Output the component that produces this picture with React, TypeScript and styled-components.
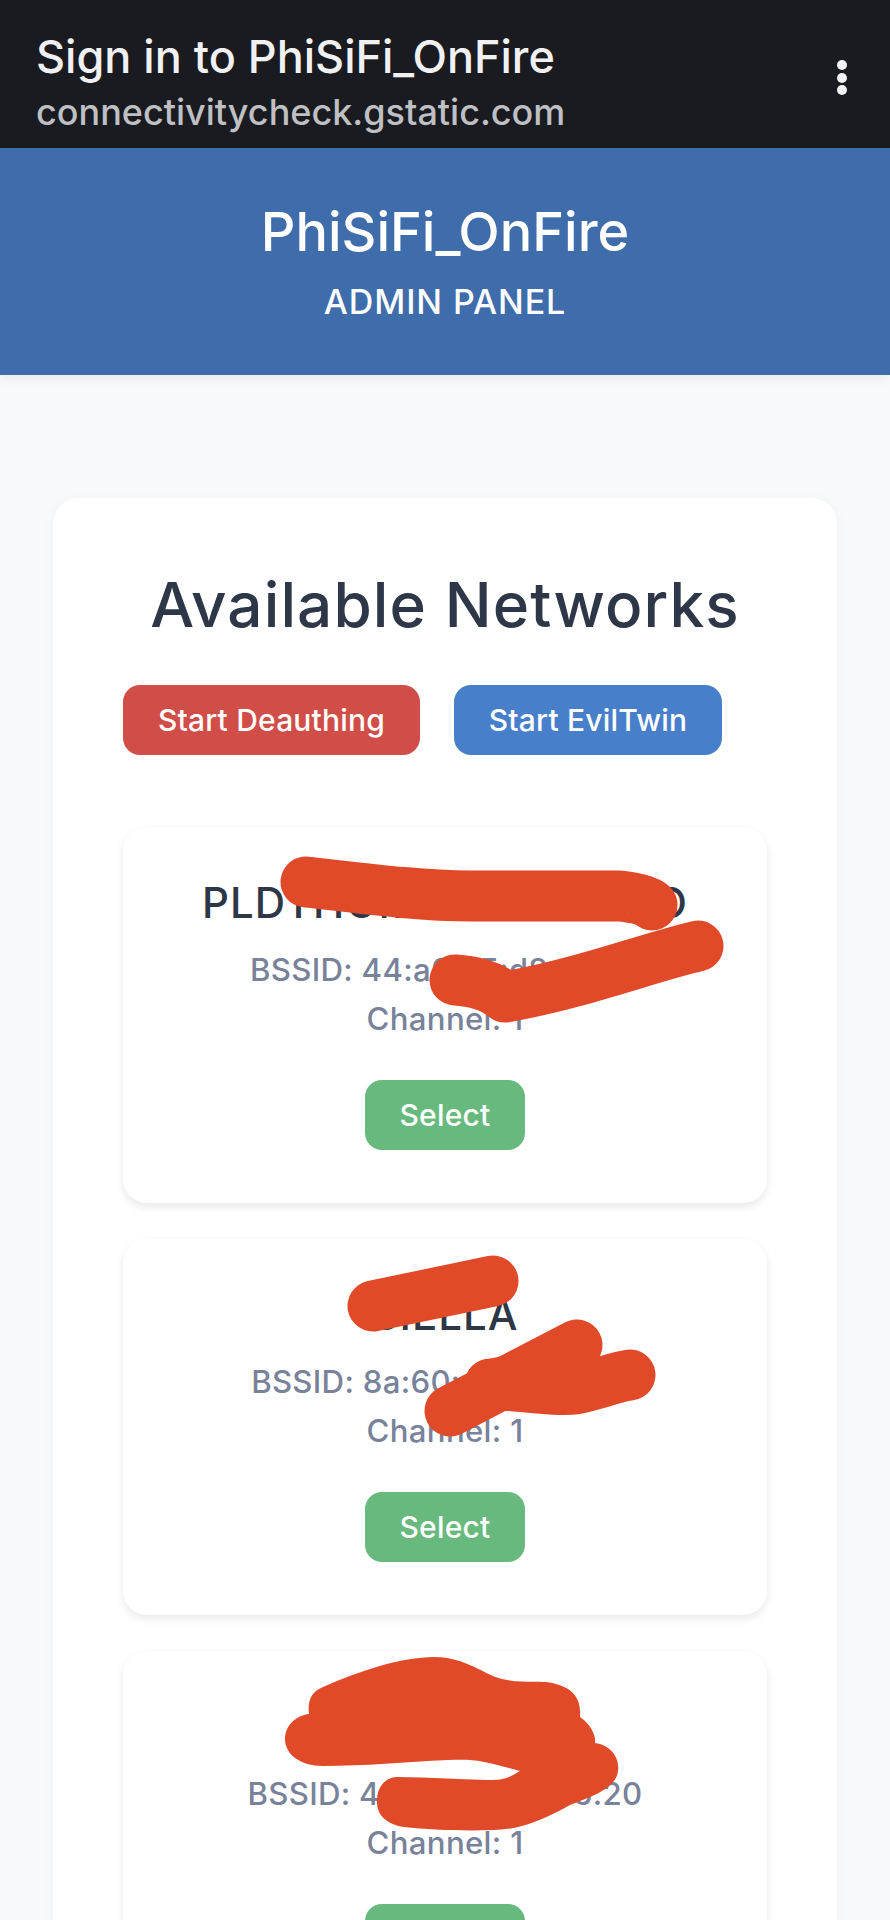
import React from "react";
import styled, { createGlobalStyle } from "styled-components";

const GlobalStyle = createGlobalStyle`
  html, body {
    margin: 0;
    padding: 0;
    background: #f8f9fb;
  }
  * {
    box-sizing: border-box;
  }
`;

const Screen = styled.div`
  height: 1920px;
  overflow: hidden;
  background: #f8f9fb;
  font-family: "Inter", "Liberation Sans", sans-serif;
`;

const BrowserBar = styled.div`
  height: 148px;
  padding: 32px 36px 0;
  display: flex;
  justify-content: space-between;
  background: #1a1b20;
`;

const BrowserText = styled.div`
  display: flex;
  flex-direction: column;
  gap: 8px;
`;

const BrowserTitle = styled.div`
  font-size: 45px;
  line-height: 50px;
  font-weight: 500;
  color: #f1f1f3;
`;

const BrowserUrl = styled.div`
  font-size: 36px;
  line-height: 44px;
  font-weight: 500;
  color: #bfc0c3;
`;

const MenuIcon = styled.svg`
  width: 12px;
  height: 38px;
  margin: 27px 6px 0 0;
  fill: #f4f4f6;
`;

const Banner = styled.header`
  height: 227px;
  padding-top: 54px;
  display: flex;
  flex-direction: column;
  align-items: center;
  background: #3f6cab;
  box-shadow: 0 4px 10px rgba(0, 0, 0, 0.06);
  color: #fff;
`;

const BannerTitle = styled.h1`
  margin: 0;
  font-size: 54px;
  line-height: 60px;
  font-weight: 500;
`;

const BannerSub = styled.div`
  margin-top: 20px;
  font-size: 34px;
  line-height: 40px;
  font-weight: 500;
  letter-spacing: 0.9px;
`;

const Main = styled.main`
  padding: 123px 53px 0;
`;

const Panel = styled.section`
  padding: 69px 70px 60px;
  border-radius: 26px;
  background: #fff;
  box-shadow: 0 2px 14px rgba(0, 0, 0, 0.035);
`;

const PanelTitle = styled.h2`
  margin: 0;
  text-align: center;
  font-size: 62px;
  line-height: 76px;
  font-weight: 500;
  letter-spacing: 1.1px;
  color: #2d3748;
`;

const Actions = styled.div`
  margin-top: 42px;
  display: flex;
  gap: 34px;
`;

const Button = styled.button<{ $color: string; $width: number }>`
  width: ${(p) => p.$width}px;
  height: 70px;
  padding: 0;
  border: 0;
  border-radius: 17px;
  background: ${(p) => p.$color};
  color: #fff;
  font-family: inherit;
  font-size: 30px;
  font-weight: 500;
  letter-spacing: 0.2px;
`;

const NetworkList = styled.div`
  margin-top: 72px;
  display: flex;
  flex-direction: column;
  gap: 36px;
`;

const NetworkCard = styled.article`
  position: relative;
  height: 376px;
  flex: none;
  padding-top: 52px;
  display: flex;
  flex-direction: column;
  align-items: center;
  border-radius: 24px;
  background: #fff;
  box-shadow: 0 4px 8px rgba(0, 0, 0, 0.09);
`;

const NetworkName = styled.h3`
  margin: 0 0 19px;
  font-size: 42px;
  line-height: 48px;
  font-weight: 500;
  letter-spacing: 1px;
  white-space: nowrap;
  color: #2d3748;
`;

const NetworkMeta = styled.div`
  font-size: 31.2px;
  line-height: 49px;
  font-weight: 500;
  letter-spacing: 0.3px;
  white-space: nowrap;
  color: #78829a;
`;

const SelectWrap = styled.div`
  margin-top: 36px;
`;

const Scribble = styled.svg`
  position: absolute;
  inset: 0;
  width: 100%;
  height: 100%;
  overflow: visible;
  pointer-events: none;
`;

const INK = "#e04a29";

const Stroke = styled.path`
  fill: none;
  stroke: ${INK};
  stroke-width: 51;
  stroke-linecap: round;
  stroke-linejoin: round;
`;

const Blot = styled.path`
  fill: ${INK};
`;

type Network = {
  name: string;
  bssid: string;
  top: number;
  strokes: string[];
  blot?: string;
};

const networks: Network[] = [
  {
    name: "PLDTHOMEFIBR5G00O",
    bssid: "44:a0:c5:d8:21:9b",
    top: 828,
    strokes: [
      "M306 883 C360 889 420 897 470 897 L620 897 C640 899 652 904 652 906",
      "M698 947 C650 958 580 985 505 998 C490 985 470 982 455 981",
    ],
  },
  {
    name: "SIELLA",
    bssid: "8a:60:c1:d8:26:9b",
    top: 1240,
    strokes: [
      "M373 1307 L493 1282",
      "M450 1412 L577 1346 C540 1370 505 1385 490 1385 C530 1388 560 1392 575 1390 C600 1385 615 1378 630 1376",
    ],
  },
  {
    name: "Network",
    bssid: "4c:8e:a0:d2:56:20",
    top: 1652,
    strokes: [],
    blot:
      "M323 1688 C360 1672 400 1658 435 1658 C465 1658 485 1676 502 1680 C520 1684 535 1682 546 1683 C568 1686 582 1695 580 1718 C590 1725 596 1735 595 1744 C610 1746 620 1758 618 1772 C616 1790 590 1798 570 1806 C545 1820 520 1831 493 1831 C465 1832 430 1831 404 1828 C385 1825 376 1815 377 1800 C378 1785 388 1778 397 1778 C430 1778 465 1781 493 1781 C505 1781 512 1777 520 1772 C505 1768 495 1765 484 1763 C470 1760 460 1761 448 1761 C405 1763 365 1767 323 1767 C300 1767 285 1755 285 1740 C285 1725 298 1716 309 1715 C307 1700 313 1692 323 1688 Z",
  },
];

export default function App() {
  return (
    <>
      <GlobalStyle />
      <Screen>
        <BrowserBar>
          <BrowserText>
            <BrowserTitle>Sign in to PhiSiFi_OnFire</BrowserTitle>
            <BrowserUrl>connectivitycheck.gstatic.com</BrowserUrl>
          </BrowserText>
          <MenuIcon viewBox="0 0 12 38">
            <circle cx="6" cy="6" r="5" />
            <circle cx="6" cy="19" r="5" />
            <circle cx="6" cy="31" r="5" />
          </MenuIcon>
        </BrowserBar>
        <Banner>
          <BannerTitle>PhiSiFi_OnFire</BannerTitle>
          <BannerSub>ADMIN PANEL</BannerSub>
        </Banner>
        <Main>
          <Panel>
            <PanelTitle>Available Networks</PanelTitle>
            <Actions>
              <Button $color="#d14d47" $width={297}>Start Deauthing</Button>
              <Button $color="#487fca" $width={268}>Start EvilTwin</Button>
            </Actions>
            <NetworkList>
              {networks.map((n) => (
                <NetworkCard key={n.top}>
                  <NetworkName>{n.name}</NetworkName>
                  <NetworkMeta>BSSID: {n.bssid}</NetworkMeta>
                  <NetworkMeta>Channel: 1</NetworkMeta>
                  <SelectWrap>
                    <Button $color="#68b97d" $width={160}>Select</Button>
                  </SelectWrap>
                  <Scribble viewBox={`123 ${n.top} 644 376`}>
                    {n.strokes.map((d) => (
                      <Stroke key={d} d={d} />
                    ))}
                    {n.blot && <Blot d={n.blot} />}
                  </Scribble>
                </NetworkCard>
              ))}
            </NetworkList>
          </Panel>
        </Main>
      </Screen>
    </>
  );
}
